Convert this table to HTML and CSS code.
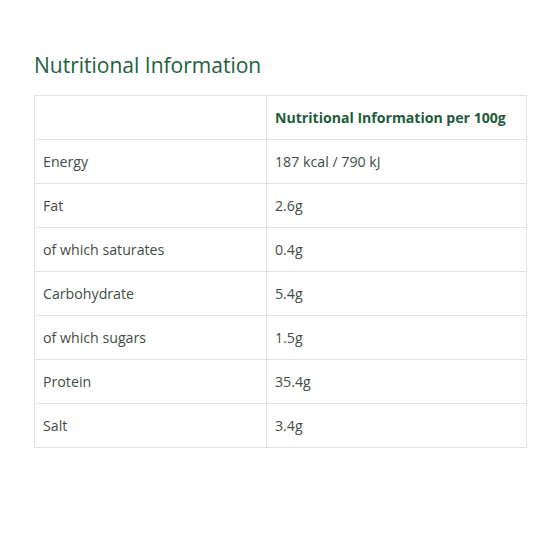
FILE: index.html
```html
<!DOCTYPE html>
<html>
<head>
<meta charset="utf-8">
<link rel="stylesheet" href="styles.css">
</head>
<body>
<section class="nutrition">
  <h2 class="title">Nutritional Information</h2>
  <table class="table">
    <thead>
      <tr><th></th><th>Nutritional Information per 100g</th></tr>
    </thead>
    <tbody>
      <tr><td>Energy</td><td>187 kcal / 790 kJ</td></tr>
      <tr><td>Fat</td><td>2.6g</td></tr>
      <tr><td>of which saturates</td><td>0.4g</td></tr>
      <tr><td>Carbohydrate</td><td>5.4g</td></tr>
      <tr><td>of which sugars</td><td>1.5g</td></tr>
      <tr><td>Protein</td><td>35.4g</td></tr>
      <tr><td>Salt</td><td>3.4g</td></tr>
    </tbody>
  </table>
</section>
</body>
</html>
```
FILE: styles.css
```css
html, body { margin: 0; padding: 0; background: #fff; }
body { font-family: "Open Sans", "Noto Sans", sans-serif; color: #3f4d44; }
.nutrition { padding: 50px 33px 0 34px; }
.title {
  margin: 0 0 15px 0;
  font-weight: 400;
  font-size: 21px;
  line-height: 30px;
  color: #23603c;
}
.table {
  width: 493px;
  border-collapse: collapse;
  font-size: 14.2px;
}
.table th, .table td {
  border: 1px solid #e1e1e1;
  height: 43px;
  padding: 0 8px;
  text-align: left;
  vertical-align: middle;
  font-weight: 400;
}
.table th:first-child, .table td:first-child { width: 215px; }
.table th { font-weight: 700; color: #1f5b3a; font-size: 14.1px; }
```
